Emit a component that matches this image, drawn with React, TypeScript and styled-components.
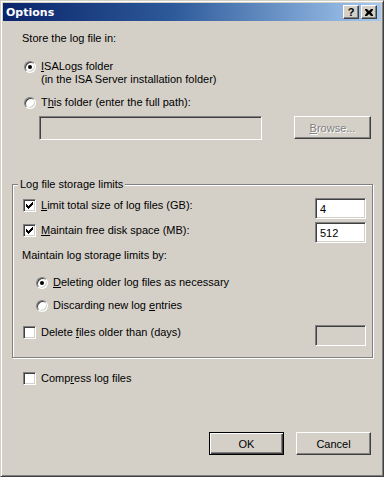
import styled, { createGlobalStyle } from "styled-components";

const GlobalStyle = createGlobalStyle`
    html, body {
        margin: 0;
        padding: 0;
        background: #d4d0c8;
    }
    body {
        font-family: "Liberation Sans", Arial, sans-serif;
        font-size: 11px;
        color: #000;
    }
`;

const Window = styled.div`
    width: 384px;
    height: 477px;
    box-sizing: border-box;
    background: #d4d0c8;
    border: 1px solid;
    border-color: #d4d0c8 #404040 #404040 #d4d0c8;
    box-shadow: inset 1px 1px 0 #fff, inset -1px -1px 0 #808080;
    padding: 2px;
    display: flex;
    flex-direction: column;
`;
const TitleBar = styled.div`
    height: 18px;
    flex: none;
    display: flex;
    align-items: center;
    padding: 0 4px 0 3px;
    background: linear-gradient(90deg, #0a246a 0%, #2d5a9a 45%, #a6caf0 100%);
    color: #fff;
    font-family: "DejaVu Sans", "Liberation Sans", sans-serif;
    font-weight: bold;
    font-size: 11px;
`;
const TitleText = styled.span`
    flex: 1;
`;
const TitleButton = styled.div<{ $gap?: number }>`
    width: 16px;
    height: 14px;
    box-sizing: border-box;
    margin-left: ${(p) => p.$gap ?? 0}px;
    background: #d4d0c8;
    border: 1px solid;
    border-color: #fff #404040 #404040 #fff;
    box-shadow: inset -1px -1px 0 #808080;
    display: flex;
    align-items: center;
    justify-content: center;
    color: #000;
    font-family: "Liberation Sans", sans-serif;
    font-weight: bold;
    font-size: 11px;
    line-height: 11px;
`;
const Body = styled.div`
    flex: 1;
    display: flex;
    flex-direction: column;
    padding: 11px 8px 0 9px;
`;
const Label = styled.div<{ $top?: number; $left?: number }>`
    line-height: 13px;
    margin-top: ${(p) => p.$top ?? 0}px;
    margin-left: ${(p) => p.$left ?? 0}px;
    white-space: nowrap;
`;
const OptionRow = styled.div<{ $top?: number; $left?: number }>`
    display: flex;
    align-items: flex-start;
    gap: 5px;
    line-height: 13px;
    margin-top: ${(p) => p.$top ?? 0}px;
    margin-left: ${(p) => p.$left ?? 0}px;
    white-space: nowrap;
`;
const Radio = styled.span<{ $on?: boolean }>`
    flex: none;
    width: 12px;
    height: 12px;
    box-sizing: border-box;
    border-radius: 50%;
    background: #fff;
    border: 1px solid;
    border-color: #808080 #fff #fff #808080;
    box-shadow: inset 1px 1px 0 #404040, inset -1px -1px 0 #d4d0c8;
    display: flex;
    align-items: center;
    justify-content: center;
    margin-top: 1px;
    &::after {
        content: "";
        width: 4px;
        height: 4px;
        border-radius: 50%;
        background: ${(p) => (p.$on ? "#000" : "transparent")};
    }
`;
const Box = styled.span`
    flex: none;
    width: 13px;
    height: 13px;
    box-sizing: border-box;
    background: #fff;
    border: 1px solid;
    border-color: #808080 #fff #fff #808080;
    box-shadow: inset 1px 1px 0 #404040, inset -1px -1px 0 #d4d0c8;
    display: flex;
    align-items: center;
    justify-content: center;
`;
const FieldRow = styled.div<{ $top?: number }>`
    display: flex;
    align-items: flex-start;
    justify-content: space-between;
    margin-top: ${(p) => p.$top ?? 0}px;
`;
const CheckLabel = styled.div<{ $drop?: number; $left?: number }>`
    display: flex;
    align-items: center;
    gap: 5px;
    line-height: 13px;
    white-space: nowrap;
    margin-top: ${(p) => p.$drop ?? 0}px;
    margin-left: ${(p) => p.$left ?? 0}px;
`;
const Edit = styled.div<{ $width: number; $height?: number; $disabled?: boolean }>`
    width: ${(p) => p.$width}px;
    height: ${(p) => p.$height ?? 21}px;
    box-sizing: border-box;
    background: ${(p) => (p.$disabled ? "#d4d0c8" : "#fff")};
    border: 1px solid;
    border-color: #808080 #fff #fff #808080;
    box-shadow: inset 1px 1px 0 #404040, inset -1px -1px 0 #d4d0c8;
    padding-left: 4px;
    display: flex;
    align-items: center;
`;
const PathRow = styled.div`
    display: flex;
    justify-content: space-between;
    margin: 7px 2px 0 27px;
`;
const Button = styled.div<{ $default?: boolean; $disabled?: boolean; $width?: number }>`
    width: ${(p) => p.$width ?? 75}px;
    height: 23px;
    box-sizing: border-box;
    display: flex;
    align-items: center;
    justify-content: center;
    background: #d4d0c8;
    border: 1px solid;
    border-color: ${(p) => (p.$default ? "#000" : "#fff #404040 #404040 #fff")};
    box-shadow: ${(p) =>
        p.$default
            ? "inset 1px 1px 0 #fff, inset -1px -1px 0 #404040, inset -2px -2px 0 #808080"
            : "inset -1px -1px 0 #808080"};
    color: ${(p) => (p.$disabled ? "#808080" : "#000")};
    text-shadow: ${(p) => (p.$disabled ? "1px 1px 0 #fff" : "none")};
`;
const Group = styled.fieldset`
    margin: 38px 0 0 0;
    padding: 0 6px 11px 10px;
    border: 1px solid #808080;
    box-shadow: inset 1px 1px 0 #fff, 1px 1px 0 #fff;
    min-width: 0;
`;
const Legend = styled.legend`
    margin-left: -5px;
    padding: 0 2px;
    line-height: 13px;
    background: #d4d0c8;
`;
const ButtonRow = styled.div`
    display: flex;
    justify-content: flex-end;
    gap: 12px;
    margin: 47px 2px 0 0;
`;

const Tick = () => (
    <svg width="7" height="7" viewBox="0 0 7 7">
        <path d="M0 2h1v1h1v1h1v-1h1v-1h1v-1h1v-1h1v3h-1v1h-1v1h-1v1h-1v1h-1v-1h-1v-1h-1z" fill="#000" />
    </svg>
);

const CloseGlyph = () => (
    <svg width="8" height="7" viewBox="0 0 8 7">
        <path d="M0 0h2l2 2 2-2h2v1l-2 2.5 2 2.5v1h-2l-2-2-2 2h-2v-1l2-2.5-2-2.5z" fill="#000" />
    </svg>
);

function App() {
    return (
        <>
            <GlobalStyle />
            <Window>
                <TitleBar>
                    <TitleText>Options</TitleText>
                    <TitleButton>?</TitleButton>
                    <TitleButton $gap={2}>
                        <CloseGlyph />
                    </TitleButton>
                </TitleBar>
                <Body>
                    <Label $left={10}>Store the log file in:</Label>
                    <OptionRow $top={15} $left={12}>
                        <Radio $on />
                        <div>
                            <u>I</u>SALogs folder
                            <br />
                            (in the ISA Server installation folder)
                        </div>
                    </OptionRow>
                    <OptionRow $top={10} $left={12}>
                        <Radio />
                        <div>
                            T<u>h</u>is folder (enter the full path):
                        </div>
                    </OptionRow>
                    <PathRow>
                        <Edit $width={223} $height={24} $disabled />
                        <Button $disabled $width={77}>
                            <span>
                                <u>B</u>rowse...
                            </span>
                        </Button>
                    </PathRow>

                    <Group>
                        <Legend>Log file storage limits</Legend>
                        <FieldRow $top={7}>
                            <CheckLabel $drop={1}>
                                <Box>
                                    <Tick />
                                </Box>
                                <span>
                                    <u>L</u>imit total size of log files (GB):
                                </span>
                            </CheckLabel>
                            <Edit $width={51}>4</Edit>
                        </FieldRow>
                        <FieldRow $top={3}>
                            <CheckLabel $drop={2}>
                                <Box>
                                    <Tick />
                                </Box>
                                <span>
                                    <u>M</u>aintain free disk space (MB):
                                </span>
                            </CheckLabel>
                            <Edit $width={51}>512</Edit>
                        </FieldRow>
                        <Label $top={6} $left={-1}>
                            Maintain log storage limits by:
                        </Label>
                        <OptionRow $top={14} $left={13}>
                            <Radio $on />
                            <div>
                                <u>D</u>eleting older log files as necessary
                            </div>
                        </OptionRow>
                        <OptionRow $top={10} $left={13}>
                            <Radio />
                            <div>
                                Discarding new log <u>e</u>ntries
                            </div>
                        </OptionRow>
                        <FieldRow $top={13}>
                            <CheckLabel $drop={1}>
                                <Box />
                                <span>
                                    Delete <u>f</u>iles older than (days)
                                </span>
                            </CheckLabel>
                            <Edit $width={51} $disabled />
                        </FieldRow>
                    </Group>

                    <CheckLabel $drop={14} $left={11}>
                        <Box />
                        <span>
                            Comp<u>r</u>ess log files
                        </span>
                    </CheckLabel>

                    <ButtonRow>
                        <Button $default>OK</Button>
                        <Button>Cancel</Button>
                    </ButtonRow>
                </Body>
            </Window>
        </>
    );
}

export default App;
